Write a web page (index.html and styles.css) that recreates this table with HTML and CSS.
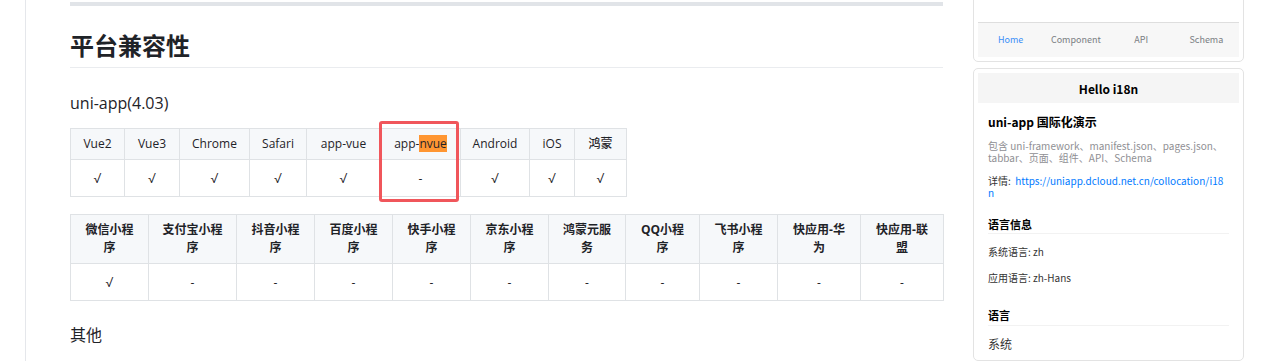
FILE: index.html
```html
<!DOCTYPE html>
<html lang="zh-CN">
<head>
<meta charset="utf-8">
<title>平台兼容性</title>
<link rel="stylesheet" href="styles.css">
</head>
<body>
<div class="page">
  <div class="gutter"></div>
  <main class="doc">
    <div class="rule"></div>
    <h2 class="title">平台兼容性</h2>
    <h3 class="sub">uni-app(4.03)</h3>
    <div class="table-wrap">
      <table class="compat t1">
        <colgroup>
          <col class="w54"><col class="w55"><col class="w70"><col class="w57"><col class="w74"><col class="w80"><col class="w69"><col class="w45"><col class="w52">
        </colgroup>
        <thead>
          <tr><th>Vue2</th><th>Vue3</th><th>Chrome</th><th>Safari</th><th>app-vue</th><th>app-<span class="hl">nvue</span></th><th>Android</th><th>iOS</th><th>鸿蒙</th></tr>
        </thead>
        <tbody>
          <tr><td class="ok">√</td><td class="ok">√</td><td class="ok">√</td><td class="ok">√</td><td class="ok">√</td><td>-</td><td class="ok">√</td><td class="ok">√</td><td class="ok">√</td></tr>
        </tbody>
      </table>
      <div class="mark"></div>
    </div>
    <table class="compat t2">
      <colgroup>
        <col class="w78"><col class="w88"><col class="w78"><col class="w78"><col class="w78"><col class="w78"><col class="w77"><col class="w74"><col class="w78"><col class="w83"><col class="w83">
      </colgroup>
      <thead>
        <tr><th>微信小程序</th><th>支付宝小程序</th><th>抖音小程序</th><th>百度小程序</th><th>快手小程序</th><th>京东小程序</th><th>鸿蒙元服务</th><th>QQ小程序</th><th>飞书小程序</th><th>快应用-华为</th><th>快应用-联盟</th></tr>
      </thead>
      <tbody>
        <tr><td class="ok">√</td><td>-</td><td>-</td><td>-</td><td>-</td><td>-</td><td>-</td><td>-</td><td>-</td><td>-</td><td>-</td></tr>
      </tbody>
    </table>
    <h3 class="sub other">其他</h3>
  </main>
  <aside class="side">
    <div class="card card-top">
      <div class="blank"></div>
      <nav class="tabbar">
        <span class="tab active">Home</span>
        <span class="tab">Component</span>
        <span class="tab">API</span>
        <span class="tab">Schema</span>
      </nav>
    </div>
    <div class="card card-main">
      <div class="nav-title">Hello i18n</div>
      <div class="body">
        <div class="heading">uni-app 国际化演示</div>
        <p class="desc">包含 uni-framework、manifest.json、pages.json、tabbar、页面、组件、API、Schema</p>
        <p class="detail">详情:&nbsp; <a class="link">https://uniapp.dcloud.net.cn/collocation/i18n</a></p>
        <div class="sec first">语言信息</div>
        <p class="kv">系统语言: zh</p>
        <p class="kv second">应用语言: zh-Hans</p>
        <div class="sec">语言</div>
        <p class="item">系统</p>
      </div>
    </div>
  </aside>
</div>
</body>
</html>
```

FILE: styles.css
```css
* { box-sizing: border-box; }
html, body { margin: 0; padding: 0; background: #fff; }
body {
  font-family: "Open Sans", "Noto Sans CJK SC", sans-serif;
  color: #24292e;
}
.page {
  display: flex;
  width: 1281px;
  height: 361px;
  overflow: hidden;
}
.gutter {
  width: 26px;
  flex: none;
  border-right: 1px solid #e5e7eb;
}
.doc {
  flex: none;
  width: 873px;
  margin-left: 44px;
}
.rule {
  height: 4px;
  margin-top: 2px;
  background: #e1e4e8;
}
.title {
  margin: 25px 0 0;
  font-size: 24px;
  line-height: 30px;
  font-weight: 700;
  padding-bottom: 6px;
  border-bottom: 1px solid #eaecef;
  color: #1f2328;
}
.sub {
  margin: 25px 0 0;
  font-size: 16px;
  line-height: 20px;
  font-weight: 400;
  color: #1f2328;
}
.sub.other {
  margin-top: 24px;
}
.table-wrap {
  position: relative;
  margin-top: 15px;
}
.compat {
  border-collapse: collapse;
  table-layout: fixed;
  font-size: 12px;
  color: #1f2328;
}
.t1 { width: 556px; }
.t2 { width: 873px; margin-top: 17px; }
.compat th, .compat td {
  border: 1px solid #dfe2e5;
  text-align: center;
  padding: 0 13px;
  vertical-align: middle;
}
.compat th {
  background: #f6f8fa;
  font-weight: 500;
  line-height: 18px;
}
.t1 th { padding: 0; white-space: nowrap; }
.t1 thead tr { height: 31px; }
.compat tbody tr { height: 37px; }
.t2 thead tr { height: 49px; }
.t2 th { font-weight: 700; line-height: 17.6px; }
.compat td.ok {
  font-family: "Inter", "Noto Sans CJK SC", sans-serif;
  font-size: 13px;
  font-weight: 300;
}
.hl { background: #ff9632; }
.mark {
  position: absolute;
  left: 309px;
  top: -7px;
  width: 80px;
  height: 81px;
  border: 3px solid #f0565b;
  border-radius: 3px;
}
.w45 { width: 45px; } .w52 { width: 52px; } .w54 { width: 54px; } .w55 { width: 55px; }
.w57 { width: 57px; } .w69 { width: 69px; } .w70 { width: 70px; } .w74 { width: 74px; }
.w77 { width: 77px; } .w78 { width: 78px; } .w80 { width: 80px; } .w83 { width: 83px; }
.w88 { width: 88px; }

.side {
  flex: none;
  width: 271px;
  margin-left: 30px;
  display: flex;
  flex-direction: column;
  gap: 6px;
  font-family: "Noto Sans CJK SC", sans-serif;
}
.card {
  border: 1px solid #e3e3e3;
  border-radius: 5px;
  padding: 4px;
  background: #fff;
}
.card-top { margin-top: -10px; }
.blank { height: 27px; }
.tabbar {
  display: flex;
  height: 35px;
  border-top: 1px solid #dedede;
  background: #f7f7f7;
  align-items: center;
}
.tab {
  flex: 1;
  text-align: center;
  font-size: 9px;
  color: #7a7e83;
  padding-bottom: 1px;
}
.tab.active { color: #3a8ef7; }
.card-main { flex: 1; padding-bottom: 0; }
.nav-title {
  height: 30px;
  background: #f5f5f5;
  display: flex;
  align-items: center;
  justify-content: center;
  font-size: 12px;
  font-weight: 700;
  color: #000;
}
.body {
  padding: 11px 10px 0;
  color: #333;
}
.heading {
  font-size: 12px;
  line-height: 16px;
  font-weight: 700;
  color: #000;
}
.desc {
  margin: 10px 0 0;
  font-size: 10px;
  line-height: 12px;
  color: #8f8f94;
}
.detail {
  margin: 11px 0 0;
  font-size: 10px;
  line-height: 12px;
  color: #333;
  word-break: break-all;
}
.link { color: #007aff; }
.sec {
  margin-top: 24px;
  font-size: 11px;
  line-height: 14px;
  font-weight: 700;
  color: #000;
  padding-bottom: 3px;
  border-bottom: 1px solid #f2f2f2;
}
.sec.first { margin-top: 18px; padding-bottom: 2px; }
.kv {
  margin: 12px 0 0;
  font-size: 10px;
  line-height: 12px;
  color: #333;
}
.kv.second { margin-top: 14px; }
.item {
  margin: 11px 0 0;
  font-size: 12px;
  line-height: 14px;
  color: #333;
}
```
